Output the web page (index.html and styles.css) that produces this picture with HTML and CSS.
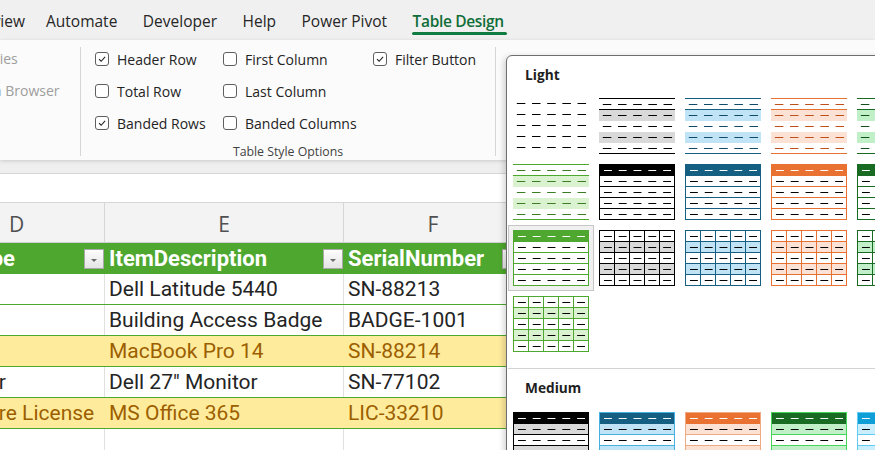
FILE: index.html
```html
<!DOCTYPE html>
<html lang="en">
<head>
  <meta charset="UTF-8" />
  <title>Asset Register - Table Design</title>
  <link rel="stylesheet" href="styles.css">
</head>
<body>
  <!-- Ribbon tabs -->
  <nav class="tabs">
    <span class="tab tab-cut"><span>Review</span></span>
    <span class="tab">Automate</span>
    <span class="tab">Developer</span>
    <span class="tab">Help</span>
    <span class="tab">Power Pivot</span>
    <span class="tab active">Table Design</span>
  </nav>

  <!-- Ribbon body -->
  <div class="ribbon">
    <div class="group group-props">
      <span class="dis">Properties</span>
      <span class="dis">Open in Browser</span>
    </div>
    <div class="sep"></div>
    <div class="group group-opts">
      <div class="opts">
        <label class="cb"><i class="box"><svg viewBox="0 0 14 14"><polyline points="3.5,7.2 6,9.6 10.6,4.6"/></svg></i>Header Row</label>
        <label class="cb"><i class="box"></i>First Column</label>
        <label class="cb"><i class="box"><svg viewBox="0 0 14 14"><polyline points="3.5,7.2 6,9.6 10.6,4.6"/></svg></i>Filter Button</label>
        <label class="cb"><i class="box"></i>Total Row</label>
        <label class="cb"><i class="box"></i>Last Column</label>
        <span></span>
        <label class="cb"><i class="box"><svg viewBox="0 0 14 14"><polyline points="3.5,7.2 6,9.6 10.6,4.6"/></svg></i>Banded Rows</label>
        <label class="cb"><i class="box"></i>Banded Columns</label>
      </div>
      <div class="caption">Table Style Options</div>
    </div>
    <div class="sep"></div>
  </div>

  <div class="formula"></div>

  <!-- Worksheet -->
  <div class="sheet">
    <div class="row colhead">
      <div class="c">D</div><div class="c">E</div><div class="c">F</div><div class="c"></div>
    </div>
    <div class="row thead">
      <div class="c"><span class="shift">ItemType</span><span class="fb"></span></div>
      <div class="c">ItemDescription<span class="fb"></span></div>
      <div class="c">SerialNumber<span class="fb"></span></div>
      <div class="c blank"></div>
    </div>
    <div class="row">
      <div class="c">Laptop</div><div class="c">Dell Latitude 5440</div><div class="c">SN-88213</div><div class="c"></div>
    </div>
    <div class="row">
      <div class="c">Badge</div><div class="c">Building Access Badge</div><div class="c">BADGE-1001</div><div class="c"></div>
    </div>
    <div class="row neutral">
      <div class="c">Laptop</div><div class="c">MacBook Pro 14</div><div class="c">SN-88214</div><div class="c"></div>
    </div>
    <div class="row">
      <div class="c">Monitor</div><div class="c">Dell 27" Monitor</div><div class="c">SN-77102</div><div class="c"></div>
    </div>
    <div class="row neutral">
      <div class="c">Software License</div><div class="c">MS Office 365</div><div class="c">LIC-33210</div><div class="c"></div>
    </div>
    <div class="row empty">
      <div class="c"></div><div class="c"></div><div class="c"></div><div class="c"></div>
    </div>
  </div>

  <!-- Table styles dropdown -->
  <div class="gallery">
    <div class="gal-head">Light</div>
    <div class="gal-grid">
      <div class="sw"><div class="th none"><i></i><i></i><i></i><i></i><i></i></div></div>
      <div class="sw"><div class="th lines k"><i></i><i></i><i></i><i></i><i></i></div></div>
      <div class="sw"><div class="th lines b"><i></i><i></i><i></i><i></i><i></i></div></div>
      <div class="sw"><div class="th lines o"><i></i><i></i><i></i><i></i><i></i></div></div>
      <div class="sw"><div class="th lines g"><i></i><i></i><i></i><i></i><i></i></div></div>

      <div class="sw"><div class="th lines lg"><i></i><i></i><i></i><i></i><i></i></div></div>
      <div class="sw"><div class="th hdr k"><i></i><i></i><i></i><i></i><i></i></div></div>
      <div class="sw"><div class="th hdr b"><i></i><i></i><i></i><i></i><i></i></div></div>
      <div class="sw"><div class="th hdr o"><i></i><i></i><i></i><i></i><i></i></div></div>
      <div class="sw"><div class="th hdr g"><i></i><i></i><i></i><i></i><i></i></div></div>

      <div class="sw on"><div class="th hdr lg"><i></i><i></i><i></i><i></i><i></i></div></div>
      <div class="sw"><div class="th grid k"><i></i><i></i><i></i><i></i><i></i></div></div>
      <div class="sw"><div class="th grid b"><i></i><i></i><i></i><i></i><i></i></div></div>
      <div class="sw"><div class="th grid o"><i></i><i></i><i></i><i></i><i></i></div></div>
      <div class="sw"><div class="th grid g"><i></i><i></i><i></i><i></i><i></i></div></div>

      <div class="sw"><div class="th grid lg"><i></i><i></i><i></i><i></i><i></i></div></div>
    </div>
    <div class="gal-sep"></div>
    <div class="gal-head">Medium</div>
    <div class="gal-grid">
      <div class="sw"><div class="th med k"><i></i><i></i><i></i><i></i><i></i></div></div>
      <div class="sw"><div class="th med b"><i></i><i></i><i></i><i></i><i></i></div></div>
      <div class="sw"><div class="th med o"><i></i><i></i><i></i><i></i><i></i></div></div>
      <div class="sw"><div class="th med g"><i></i><i></i><i></i><i></i><i></i></div></div>
      <div class="sw"><div class="th med cy"><i></i><i></i><i></i><i></i><i></i></div></div>
    </div>
  </div>
</body>
</html>
```
FILE: styles.css
```css
body {
  margin: 0;
  width: 875px;
  height: 450px;
  overflow: hidden;
  position: relative;
  background: #efefef;
  font-family: 'Open Sans', sans-serif;
  color: #242424;
}

/* ---- tabs ---- */
.tabs {
  height: 40px;
  background: #f0f0f0;
  display: flex;
  align-items: center;
  gap: 25.5px;
  font-size: 15.5px;
  color: #262626;
}

.tab {
  position: relative;
  line-height: 20px;
  padding-top: 2px;
  white-space: nowrap;
}

.tab-cut {
  width: 25px;
  margin-right: -4.5px;
  display: flex;
  justify-content: flex-end;
}

.tab.active {
  color: #0f6d37;
  font-weight: 600;
  letter-spacing: -0.35px;
}

.tab.active::after {
  content: '';
  position: absolute;
  left: -1px;
  right: -3px;
  top: 23px;
  height: 3px;
  border-radius: 2px;
  background: #107c41;
}

/* ---- ribbon ---- */
.ribbon {
  height: 120px;
  background: #fbfbfb;
  display: flex;
  box-shadow: 0 1px 4px rgba(0, 0, 0, 0.16);
  position: relative;
  font-size: 14px;
}

.sep {
  width: 1px;
  background: #d6d6d6;
  margin: 7px 0 4px;
}

.group {
  padding-top: 3px;
  box-sizing: border-box;
}

.group-props {
  width: 130px;
  margin-left: -50px;
  display: flex;
  flex-direction: column;
}

.dis {
  height: 32px;
  line-height: 32px;
  color: #9e9e9e;
  white-space: nowrap;
}

.group-opts {
  width: 414px;
  padding-left: 14px;
}

.opts {
  display: grid;
  grid-template-columns: 128px 150px auto;
  grid-auto-rows: 32px;
}

.cb {
  display: flex;
  align-items: center;
  gap: 8px;
  white-space: nowrap;
}

.box {
  width: 14px;
  height: 14px;
  box-sizing: border-box;
  border: 1px solid #5f5f5f;
  border-radius: 3px;
  background: #fff;
  display: block;
}

.box svg {
  display: block;
  width: 12px;
  height: 12px;
  fill: none;
  stroke: #1f1f1f;
  stroke-width: 1.2;
}

.caption {
  margin-top: 5px;
  line-height: 16px;
  font-size: 12.3px;
  text-align: center;
  color: #424242;
  padding-right: 14px;
}

.formula {
  margin-top: 13px;
  height: 30px;
  box-sizing: border-box;
  background: #fff;
  border-top: 1px solid #d6d6d6;
  border-bottom: 1px solid #d6d6d6;
}

/* ---- sheet ---- */
.sheet {
  margin-left: -71px;
  width: 946px;
  background: #fff;
  font-family: Roboto, sans-serif;
  font-size: 21px;
}

.row {
  display: grid;
  grid-template-columns: 176px 239px 179px 1fr;
  height: 31px;
  box-sizing: border-box;
  border-bottom: 1px solid #4ea72e;
}

.row .c {
  padding-left: 4px;
  line-height: 30px;
  white-space: nowrap;
  border-right: 1px solid #e0e0e0;
}

.row .c:last-child {
  border-right: 0;
}

.colhead {
  height: 40px;
  background: #f3f3f3;
  border-bottom: 1px solid #cfcfcf;
  font-family: 'Open Sans', sans-serif;
  font-size: 21px;
  color: #505050;
}

.colhead .c {
  padding: 4px 0 0;
  line-height: 35px;
  text-align: center;
  border-right-color: #d6d6d6;
}

.thead {
  height: 31px;
  border-bottom: 0;
}

.thead .c {
  background: #4ea72e;
  color: #fff;
  font-weight: 700;
  font-size: 22px;
  line-height: 31px;
  border-right: 0;
  display: flex;
  align-items: center;
  justify-content: space-between;
}

.thead .c.blank {
  background: #fff;
}

.shift {
  margin-left: -11px;
}

.fb {
  width: 20px;
  height: 20px;
  box-sizing: border-box;
  margin-right: 1px;
  border: 1px solid #a8a8a8;
  background: linear-gradient(#fdfdfd, #e4e4e4);
  display: flex;
  align-items: center;
  justify-content: center;
}

.fb::after {
  content: '';
  margin-top: 3px;
  border-left: 3px solid transparent;
  border-right: 3px solid transparent;
  border-top: 3px solid #6b6b6b;
}

.neutral .c {
  background: #ffeb9c;
  color: #9c5f00;
  border-right-color: transparent;
}

.row.empty {
  border-bottom: 0;
}

/* ---- table style gallery ---- */
.gallery {
  position: absolute;
  left: 506px;
  top: 55px;
  width: 520px;
  height: 460px;
  background: #fff;
  border: 1px solid #6e6e6e;
  border-radius: 6px 0 0 0;
  box-shadow: -2px 2px 6px rgba(0, 0, 0, 0.18);
}

.gal-head {
  height: 37px;
  line-height: 37px;
  padding-left: 18px;
  font-weight: 700;
  font-size: 13.7px;
  color: #1f1f1f;
}

.gal-sep + .gal-head {
  height: 38px;
  line-height: 38px;
}

.gal-grid {
  display: grid;
  grid-template-columns: repeat(5, 86px);
  padding-left: 1px;
}

.gal-sep {
  margin: 11px 0 0 1px;
  height: 1px;
  background: #d3d3d3;
}

.sw {
  width: 86px;
  height: 66px;
  padding: 4px;
  box-sizing: border-box;
  border: 1px solid transparent;
}

.sw.on {
  background: #f0f0f0;
  border-color: #c6c6c6;
}

.th {
  --c: #000;
  --band: #d9d9d9;
  --dd: #000;
  --l: var(--c);
  width: 76px;
  height: 56px;
  box-sizing: border-box;
  display: flex;
  flex-direction: column;
  background: #fff;
}

.th i {
  --dash: #000;
  display: block;
  height: 11px;
  flex: none;
  box-sizing: border-box;
  background-image: linear-gradient(to right, transparent 4px, var(--dash) 4px, var(--dash) 12px, transparent 12px);
  background-size: 20% 1px;
  background-repeat: repeat-x;
  background-position: 0 5px;
}

.th.b { --c: #156082; --band: #c0e4f5; --dd: #0f4a66; --l: #45b0e1; }
.th.o { --c: #e97132; --band: #fbe2d5; --dd: #c0501a; --l: #f1a983; }
.th.g { --c: #196b24; --band: #c1f0c8; --dd: #12501a; --l: #47d45a; }
.th.lg { --c: #4ea72e; --band: #daf2d0; --dd: #3b7d23; }
.th.cy { --c: #0f9ed5; --band: #caeefb; --l: #61cbf3; }

.th.none {
  background: transparent;
}

/* header line + banded rows */
.th.lines {
  border-top: 1px solid var(--c);
}

.th.lines i {
  --dash: var(--dd);
}

.th.lines i:first-child,
.th.lines i:last-child {
  border-bottom: 1px solid var(--c);
}

.th.lines i:nth-child(2),
.th.lines i:nth-child(4),
.th.grid i:nth-child(2),
.th.grid i:nth-child(4),
.th.med i:nth-child(2),
.th.med i:nth-child(4) {
  background-color: var(--band);
}

/* filled header, ruled rows */
.th.hdr,
.th.grid {
  border: 1px solid var(--c);
  border-bottom: 0;
}

.th.hdr i,
.th.grid i {
  border-bottom: 1px solid var(--c);
}

.th.hdr i:first-child,
.th.med i:first-child {
  --dash: #fff;
  background-color: var(--c);
}

/* full grid */
.th.grid i {
  background-image:
    linear-gradient(to right, transparent calc(100% - 1px), var(--c) 0),
    linear-gradient(to right, transparent 4px, var(--dash) 4px, var(--dash) 12px, transparent 12px);
  background-size: calc((100% + 1px) / 5) 100%, 20% 1px;
  background-position: 0 0, 0 5px;
}

/* medium */
.th.med {
  border: 1px solid var(--l);
  border-bottom: 0;
}

.th.med i {
  border-bottom: 1px solid var(--l);
}

.th.med i:first-child {
  border-bottom-color: var(--c);
}
```
